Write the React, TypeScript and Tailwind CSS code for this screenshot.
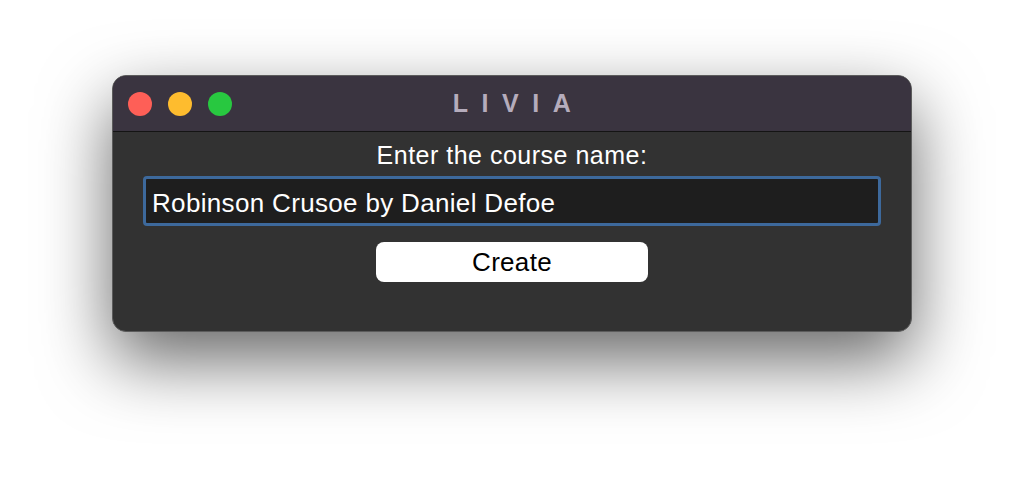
export default function App() {
  return (
    <div className="w-[1024px] h-[480px] bg-white overflow-hidden pt-[75px] font-['Liberation_Sans',Arial,sans-serif]">
      <div className="mx-auto w-[800px] h-[257px] rounded-[14px] border border-[#5c5c5c] bg-[#323232] overflow-hidden shadow-[0_28px_70px_rgba(0,0,0,0.6)] flex flex-col">
        {/* Title bar */}
        <div className="relative h-[56px] shrink-0 bg-[#3a3440] border-b border-[#141414] flex items-center">
          <div className="flex gap-4 pl-[15px] pt-[1px]">
            <span className="w-6 h-6 rounded-full bg-[#fe5f57]" />
            <span className="w-6 h-6 rounded-full bg-[#febc2e]" />
            <span className="w-6 h-6 rounded-full bg-[#28c840]" />
          </div>
          <div className="absolute inset-0 flex items-center justify-center pl-[13px]">
            <span className="text-[25px] font-bold tracking-[13.5px] text-[#b5acbc]">LIVIA</span>
          </div>
        </div>

        {/* Content */}
        <div className="flex flex-col items-center pt-[9px]">
          <p className="text-white text-[25px] leading-[28px] tracking-[0.5px]">Enter the course name:</p>
          <div className="mt-[7px] w-[738px] h-[50px] rounded-[4px] border-[3px] border-[#3d699c] bg-[#1e1e1e] flex items-center px-[6px] pt-[3px]">
            <span className="text-white text-[26px] leading-none tracking-[0.33px]">Robinson Crusoe by Daniel Defoe</span>
          </div>
          <button className="mt-[16px] w-[272px] h-[40px] rounded-[8px] bg-white text-black text-[26px] leading-none tracking-[0.3px] flex items-center justify-center">
            Create
          </button>
        </div>
      </div>
    </div>
  );
}
